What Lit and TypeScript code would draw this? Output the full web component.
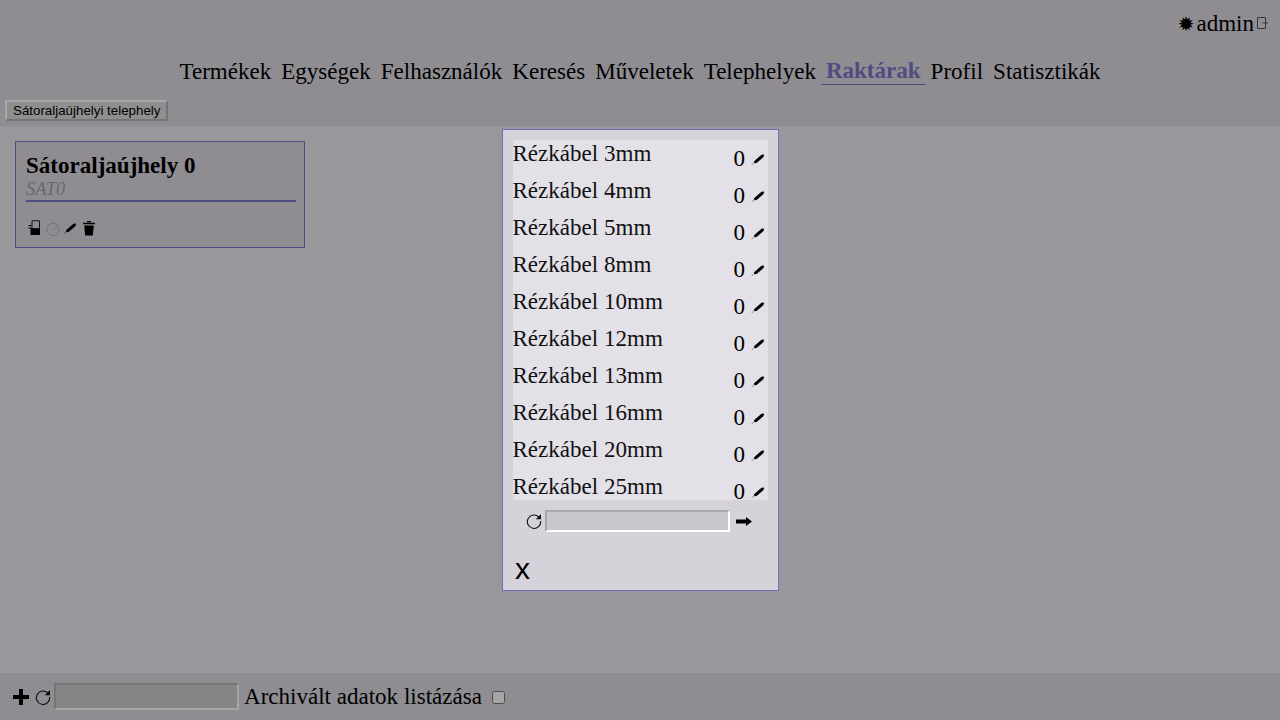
import { LitElement, html, css } from "lit";
import { customElement } from "lit/decorators.js";

const NAV = ["Termékek", "Egységek", "Felhasználók", "Keresés", "Műveletek", "Telephelyek", "Raktárak", "Profil", "Statisztikák"];
const ITEMS = ["3mm", "4mm", "5mm", "8mm", "10mm", "12mm", "13mm", "16mm", "20mm", "25mm", "32mm"];

const pencil = html`<svg class="pencil" viewBox="0 0 14 14" width="14" height="14"><path d="M3 9.300 10.500 2.800l.7.200.7-.9 1.400 1.400-.8.800.1.600-7 6.100-2.300.3z" fill="#000"/><path d="M2.400 11.200 1.600 11.900" stroke="#333" stroke-width="1"/><path d="M1.300 12.300.8 12.800" stroke="#555" stroke-width="1"/></svg>`;
const trash = html`<svg viewBox="0 0 14 16" width="14" height="16"><path d="M1 2.800h12v1.500H1zM5 1h4v1.300H5zM2.200 5.400h9.600l-1 10H3.200z" fill="#000"/></svg>`;
const store = html`<svg viewBox="0 0 14 16" width="14" height="16"><path d="M5 .8h7.500v8H5z" fill="none" stroke="#222" stroke-width="1"/><path d="M3.500 8.500h9.500V15H3.500zM1.500 5h3v1h-3zM1.500 7.500h3v1h-3z" fill="#000"/></svg>`;
const gauge = html`<svg viewBox="0 0 16 16" width="16" height="16"><circle cx="8" cy="9.500" r="6.200" fill="none" stroke="#b2b0b6" stroke-width="1"/><path d="M7.500 10 12.500 6.800" stroke="#b2b0b6" stroke-width="1"/></svg>`;
const logout = html`<svg viewBox="0 0 13 14" width="13" height="14"><path d="M1.500 1.500h8v11h-8zM6.500 7h5.500" fill="none" stroke="#555" stroke-width="1"/></svg>`;
const reload = html`<svg class="reicon" viewBox="0 0 16 16" width="16" height="16"><path d="M12.900 4.100A6.700 6.700 0 1 0 14.700 8" fill="none" stroke="#111" stroke-width="1.100"/><path d="M15 .9v5.300H9.800z" fill="#111"/></svg>`;
const plus = html`<svg class="plus" viewBox="0 0 16 16" width="16" height="16"><path d="M6 0h4v6h6v4h-6v6H6v-6H0V6h6z" fill="#000"/></svg>`;
const arrow = html`<svg class="arrow" viewBox="0 0 16 9" width="16" height="9"><path d="M0 2.500h10V0l6 4.500-6 4.500V6.500H0z" fill="#000"/></svg>`;

@customElement("app-root")
export class AppRoot extends LitElement {
  static styles = css`
    :host { display: block; position: relative; width: 1280px; height: 720px; overflow: hidden; background: #ebe8f0; color: #000; font: 23.04px "Liberation Serif", serif; }
    .page { display: flex; flex-direction: column; height: 720px; }
    header { background: #dcd9e0; height: 126px; display: flex; flex-direction: column; flex: none; }
    .user { display: flex; justify-content: flex-end; align-items: center; gap: 2px; height: 46px; padding-right: 11px; }
    .sun { font: 20px "DejaVu Sans", sans-serif; line-height: 28px; color: #000; margin-top: 1px; }
    nav { display: flex; justify-content: center; align-items: flex-end; height: 39px; }
    nav a { padding: 0 5px; line-height: 28px; }
    nav a.on { color: #7975c5; font-weight: bold; border-bottom: 1px solid #7975c5; }
    .tabs { padding: 15px 5px 0; }
    button { font: 13.333px "Liberation Sans", sans-serif; padding: 1px 6px; height: 21px; display: block; background: #dcdcdc; border: 2px solid; border-color: #ffffff #b4b4b4 #b4b4b4 #ffffff; color: #000; }
    main { flex: 1; padding: 15px 15px; }
    .card { width: 270px; height: 105px; padding: 0 8px 0 10px; border: 1px solid #7975c5; background: #dcd9e0; display: flex; flex-direction: column; }
    h2 { margin: 9px 0 0; font-size: 23.04px; line-height: 28px; font-weight: bold; }
    .code { font-size: 18.43px; font-style: italic; color: #a3a1a6; line-height: 21px; border-bottom: 2px solid #7975c5; height: 21px; }
    .acts { display: flex; align-items: center; margin-top: 18px; padding-left: 1px; height: 16px; }
    .acts .a2 { display: flex; margin-left: 4px; }
    .acts .a3 { display: flex; margin-left: 2px; }
    .acts .a4 { display: flex; margin-left: 5px; }
    footer { flex: none; height: 47px; background: #dcd9e0; display: flex; align-items: center; padding: 0 0 0 13px; box-sizing: border-box; }
    .plus { flex: none; margin: 1px 6px 0 0; }
    footer .reicon { margin-right: 3px; }
    .finput { width: 185px; height: 27px; box-sizing: border-box; border: 2px solid; border-color: #b4b4b4 #ffffff #ffffff #b4b4b4; background: #cdcdcd; margin-right: 5px; }
    .lab { margin-right: 10px; }
    input[type=checkbox] { margin: 2px 0 0; width: 13px; height: 13px; }
    .overlay { position: absolute; inset: 0; background: rgba(0,0,0,.35); }
    .modal { position: absolute; left: 502px; top: 129px; width: 275px; height: 460px; background: #d5d2da; border: 1px solid #6f6fc0; display: flex; flex-direction: column; }
    .list { margin: 10px 10px 0; height: 360px; width: 255px; overflow: hidden; background: #e3e0e8; flex: none; }
    .row { display: flex; height: 37px; justify-content: space-between; }
    .name { line-height: 27px; color: #111; margin-left: -.5px; }
    .val { display: flex; align-items: center; gap: 6px; padding: 0 3px 0 0; height: 32px; margin-top: 2px; }
    .val .pencil { margin-top: 2px; }
    .pencil { display: block; }
    .send { display: flex; align-items: center; height: 22px; margin-top: 10px; padding-left: 23px; }
    .send .reicon { margin-right: 3px; }
    .minput { width: 185px; height: 22px; box-sizing: border-box; border: 2px solid; border-color: #a9a9ad #fff #fff #a9a9ad; background: #c8c7cc; }
    .arrow { flex: none; margin-left: 6px; }
    .x { font: 30px "Liberation Sans", sans-serif; padding: 18px 0 0 12px; line-height: 38px; }
  `;

  render() {
    return html`
      <div class="page">
        <header>
          <div class="user"><span class="sun">✹</span><span>admin</span>${logout}</div>
          <nav>${NAV.map((n) => html`<a class=${n === "Raktárak" ? "on" : ""}>${n}</a>`)}</nav>
          <div class="tabs"><button>Sátoraljaújhelyi telephely</button></div>
        </header>
        <main>
          <div class="card">
            <h2>Sátoraljaújhely 0</h2>
            <div class="code">SAT0</div>
            <div class="acts">${store}<span class="a2">${gauge}</span><span class="a3">${pencil}</span><span class="a4">${trash}</span></div>
          </div>
        </main>
        <footer>
          ${plus}${reload}
          <div class="finput"></div>
          <span class="lab">Archivált adatok listázása</span>
          <input type="checkbox" />
        </footer>
      </div>
      <div class="overlay"></div>
      <div class="modal">
        <div class="list">
          ${ITEMS.map((i) => html`<div class="row"><span class="name">Rézkábel ${i}</span><span class="val"><span>0</span>${pencil}</span></div>`)}
        </div>
        <div class="send">${reload}<div class="minput"></div>${arrow}</div>
        <div class="x">x</div>
      </div>
    `;
  }
}
